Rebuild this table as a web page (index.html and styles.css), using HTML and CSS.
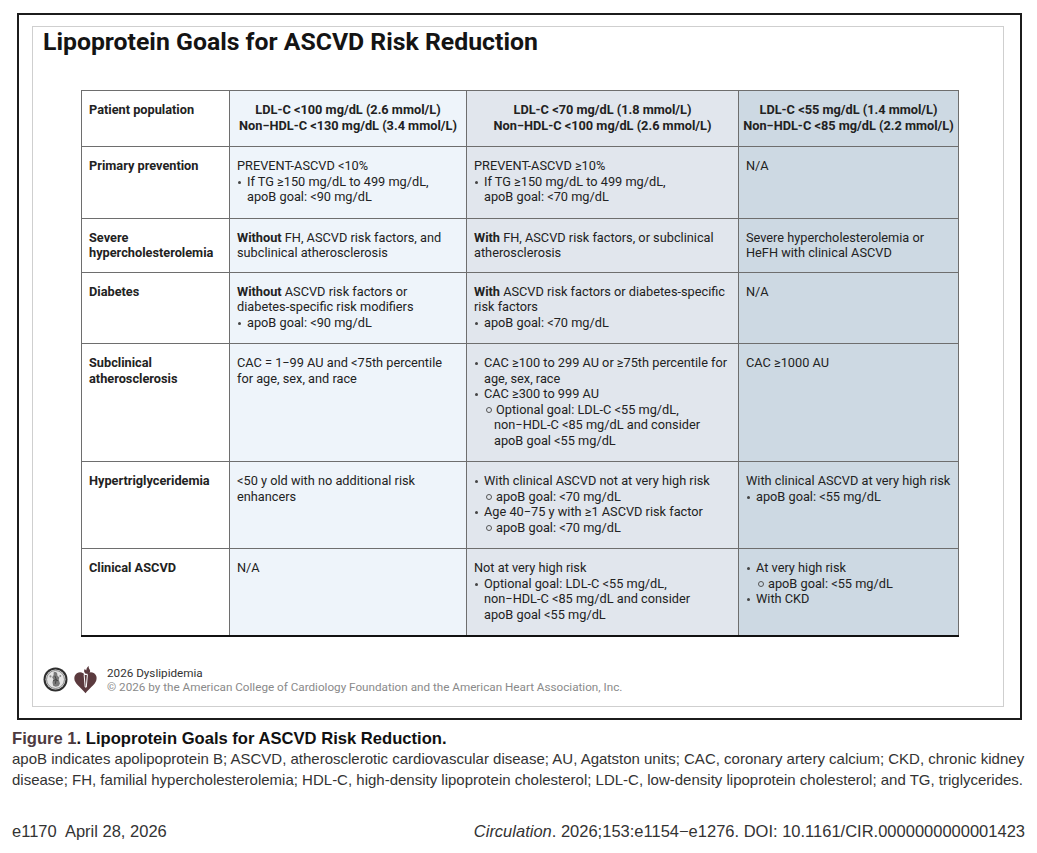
FILE: index.html
```html
<!DOCTYPE html>
<html lang="en">
<head>
<meta charset="utf-8">
<title>Lipoprotein Goals for ASCVD Risk Reduction</title>
<link rel="stylesheet" href="styles.css">
</head>
<body>
<div class="page">
  <div class="frame">
    <div class="card">
      <h1 class="title">Lipoprotein Goals for ASCVD Risk Reduction</h1>
      <table class="goals">
        <colgroup>
          <col class="c1"><col class="c2"><col class="c3"><col class="c4">
        </colgroup>
        <thead>
          <tr>
            <th class="rowhead">Patient population</th>
            <th class="t2">LDL-C &lt;100 mg/dL (2.6 mmol/L)<br>Non−HDL-C &lt;130 mg/dL (3.4 mmol/L)</th>
            <th class="t3">LDL-C &lt;70 mg/dL (1.8 mmol/L)<br>Non−HDL-C &lt;100 mg/dL (2.6 mmol/L)</th>
            <th class="t4">LDL-C &lt;55 mg/dL (1.4 mmol/L)<br>Non−HDL-C &lt;85 mg/dL (2.2 mmol/L)</th>
          </tr>
        </thead>
        <tbody>
          <tr>
            <th class="rowhead">Primary prevention</th>
            <td class="t2">PREVENT-ASCVD &lt;10%
              <ul><li>If TG ≥150 mg/dL to 499 mg/dL,<br>apoB goal: &lt;90 mg/dL</li></ul></td>
            <td class="t3">PREVENT-ASCVD ≥10%
              <ul><li>If TG ≥150 mg/dL to 499 mg/dL,<br>apoB goal: &lt;70 mg/dL</li></ul></td>
            <td class="t4">N/A</td>
          </tr>
          <tr class="short">
            <th class="rowhead">Severe<br>hypercholesterolemia</th>
            <td class="t2"><b>Without</b> FH, ASCVD risk factors, and<br>subclinical atherosclerosis</td>
            <td class="t3"><b>With</b> FH, ASCVD risk factors, or subclinical<br>atherosclerosis</td>
            <td class="t4">Severe hypercholesterolemia or<br>HeFH with clinical ASCVD</td>
          </tr>
          <tr>
            <th class="rowhead">Diabetes</th>
            <td class="t2"><b>Without</b> ASCVD risk factors or<br>diabetes-specific risk modifiers
              <ul><li>apoB goal: &lt;90 mg/dL</li></ul></td>
            <td class="t3"><b>With</b> ASCVD risk factors or diabetes-specific<br>risk factors
              <ul><li>apoB goal: &lt;70 mg/dL</li></ul></td>
            <td class="t4">N/A</td>
          </tr>
          <tr>
            <th class="rowhead">Subclinical<br>atherosclerosis</th>
            <td class="t2">CAC = 1−99 AU and &lt;75th percentile<br>for age, sex, and race</td>
            <td class="t3">
              <ul>
                <li>CAC ≥100 to 299 AU or ≥75th percentile for<br>age, sex, race</li>
                <li>CAC ≥300 to 999 AU
                  <ul><li>Optional goal: LDL-C &lt;55 mg/dL,<br>non−HDL-C &lt;85 mg/dL and consider<br>apoB goal &lt;55 mg/dL</li></ul>
                </li>
              </ul>
            </td>
            <td class="t4">CAC ≥1000 AU</td>
          </tr>
          <tr>
            <th class="rowhead">Hypertriglyceridemia</th>
            <td class="t2">&lt;50 y old with no additional risk<br>enhancers</td>
            <td class="t3">
              <ul>
                <li>With clinical ASCVD not at very high risk
                  <ul><li>apoB goal: &lt;70 mg/dL</li></ul>
                </li>
                <li>Age 40−75 y with ≥1 ASCVD risk factor
                  <ul><li>apoB goal: &lt;70 mg/dL</li></ul>
                </li>
              </ul>
            </td>
            <td class="t4">With clinical ASCVD at very high risk
              <ul><li>apoB goal: &lt;55 mg/dL</li></ul></td>
          </tr>
          <tr>
            <th class="rowhead">Clinical ASCVD</th>
            <td class="t2">N/A</td>
            <td class="t3">Not at very high risk
              <ul><li>Optional goal: LDL-C &lt;55 mg/dL,<br>non−HDL-C &lt;85 mg/dL and consider<br>apoB goal &lt;55 mg/dL</li></ul></td>
            <td class="t4">
              <ul>
                <li>At very high risk
                  <ul><li>apoB goal: &lt;55 mg/dL</li></ul>
                </li>
                <li>With CKD</li>
              </ul>
            </td>
          </tr>
        </tbody>
      </table>
      <div class="credit">
        <svg class="seal" width="25" height="25" viewBox="0 0 24 24" aria-hidden="true">
          <circle cx="12" cy="12" r="11.5" fill="#2e2e2e"/>
          <circle cx="12" cy="12" r="9.6" fill="#e4e4e4"/>
          <circle cx="12" cy="12" r="8.6" fill="none" stroke="#6a6a6a" stroke-width="0.7"/>
          <path d="M10.2 5.2c1.4-.9 3-.4 3.4 1l.3 2.3 1.8 1.6-.6 2.2 1.2 3.6-1.3 2.4-2.8.6-2.4-1-.7-3.1.9-2.8-1.2-2.2 1.4-2.1z" fill="#7a7a7a"/>
          <path d="M11.4 8.5l1.3 3.4-.8 4.2M9.5 13.5l2.4-1.4 2.6 1.2" fill="none" stroke="#3a3a3a" stroke-width="0.8"/>
          <circle cx="7.2" cy="9" r="1" fill="#8a8a8a"/>
          <circle cx="16.6" cy="8.6" r="0.9" fill="#8a8a8a"/>
        </svg>
        <svg class="heart" width="25" height="29" viewBox="0 0 25 28" aria-hidden="true">
          <path d="M12.5 10.2C11 6.9 7 5.9 4.3 7.4 1.2 9.1.6 13 2.3 16.3c1.9 3.8 6.4 6.7 10.2 11.4 3.8-4.7 8.3-7.6 10.2-11.4 1.7-3.3 1.1-7.2-2-8.9-2.7-1.5-6.7-.5-8.2 2.8z" fill="#5b3a3e"/>
          <path d="M11.1 9h3.3l-1.1 12.6h-1.1z" fill="#5b3a3e" stroke="#fff" stroke-width="1"/>
          <path d="M12.6 8.2c-1.8-1.4-2-3.4-.6-5 .2 1 .8 1.4 1.4 1.6-.3-1.4.5-3 2.4-4.4-.4 1.6.4 2.8 1 3.8.8 1.4.3 3-1.4 4z" fill="#5b3a3e"/>
        </svg>
        <div class="credit-text">
          <div class="credit-name">2026 Dyslipidemia</div>
          <div class="credit-copy">© 2026 by the American College of Cardiology Foundation and the American Heart Association, Inc.</div>
        </div>
      </div>
    </div>
  </div>
  <div class="caption">
    <p class="caption-title"><span class="fig-num">Figure 1</span>. Lipoprotein Goals for ASCVD Risk Reduction.</p>
    <p class="caption-body">apoB indicates apolipoprotein B; ASCVD, atherosclerotic cardiovascular disease; AU, Agatston units; CAC, coronary artery calcium; CKD, chronic kidney<br>disease; FH, familial hypercholesterolemia; HDL-C, high-density lipoprotein cholesterol; LDL-C, low-density lipoprotein cholesterol; and TG, triglycerides.</p>
  </div>
  <div class="pagefoot">
    <span>e1170&nbsp; April 28, 2026</span>
    <span><i>Circulation</i>. 2026;153:e1154−e1276. DOI: 10.1161/CIR.0000000000001423</span>
  </div>
</div>
</body>
</html>
```
FILE: styles.css
```css
* { box-sizing: border-box; }

body {
  margin: 0;
  background: #ffffff;
  color: #222;
  font-family: "Liberation Sans", Arial, sans-serif;
}

.page {
  padding: 13px 12px 0 12px;
}

.frame {
  width: 1005px;
  height: 707px;
  margin-left: 5px;
  border: 2px solid #1c1c1c;
  padding: 11px 16px 11px 13px;
}

.card {
  height: 100%;
  border: 1px solid #cfcfcf;
  background: #fff;
  display: flex;
  flex-direction: column;
  padding-left: 10px;
}

.title {
  margin: 0;
  font-family: Roboto, "Liberation Sans", sans-serif;
  font-weight: 700;
  font-size: 24.8px;
  line-height: 29px;
  color: #141414;
}

/* ---------- table ---------- */
.goals {
  margin: 34px 0 0 38px;
  width: 877px;
  border-collapse: collapse;
  table-layout: fixed;
  font-family: Roboto, "Liberation Sans", sans-serif;
  font-size: 12.75px;
  line-height: 15.5px;
  color: #222;
  border-top: 1px solid #555;
  border-left: 1px solid #555;
  border-right: 1px solid #555;
  border-bottom: 2px solid #111;
}

.c1 { width: 148px; }
.c2 { width: 237px; }
.c3 { width: 272px; }
.c4 { width: 220px; }

.goals th,
.goals td {
  border: 1px solid #6e6e6e;
  padding: 11px 6px 13px 7px;
  vertical-align: top;
  text-align: left;
  white-space: nowrap;
}

.goals tr.short th,
.goals tr.short td {
  padding-bottom: 11px;
}

.goals thead th {
  font-weight: 700;
  padding-bottom: 13px;
}

.goals thead th.t2,
.goals thead th.t3,
.goals thead th.t4 {
  text-align: center;
  padding-left: 4px;
  padding-right: 4px;
}

.goals .rowhead {
  font-weight: 700;
  background: #ffffff;
}

.goals b { font-weight: 700; }

.t2 { background: #eef4fa; }
.t3 { background: #e1e6ed; }
.t4 { background: #cdd9e3; }

.goals ul {
  list-style: none;
  margin: 0;
  padding: 0 0 0 10px;
}

.goals li::before {
  content: "";
  display: inline-block;
  width: 3px;
  height: 3px;
  border-radius: 50%;
  background: #444;
  vertical-align: middle;
  margin: 0 6px 0 -9px;
}

.goals li ul {
  padding-left: 10px;
}

.goals li li::before {
  width: 4px;
  height: 4px;
  background: transparent;
  border: 1px solid #555;
  margin: 0 4px 0 -8px;
}

/* ---------- credit ---------- */
.credit {
  margin-top: 28px;
  display: flex;
  align-items: center;
}

.seal { margin-right: 5px; }
.heart { margin-right: 9px; }

.credit-text {
  font-family: Roboto, "Liberation Sans", sans-serif;
  font-size: 11.7px;
  line-height: 14px;
}

.credit-name { color: #333; }
.credit-copy { color: #8a8a8a; }

/* ---------- caption ---------- */
.caption {
  margin-top: 9px;
}

.caption p { margin: 0; }

.caption-title {
  font-size: 16.6px;
  line-height: 20px;
  font-weight: 700;
  color: #111;
}

.fig-num { color: #4d3a40; }

.caption-body {
  font-size: 15px;
  line-height: 20.5px;
  color: #333;
}

.pagefoot {
  margin-top: 31px;
  display: flex;
  justify-content: space-between;
  font-size: 16.5px;
  line-height: 20px;
  color: #333;
}
```
